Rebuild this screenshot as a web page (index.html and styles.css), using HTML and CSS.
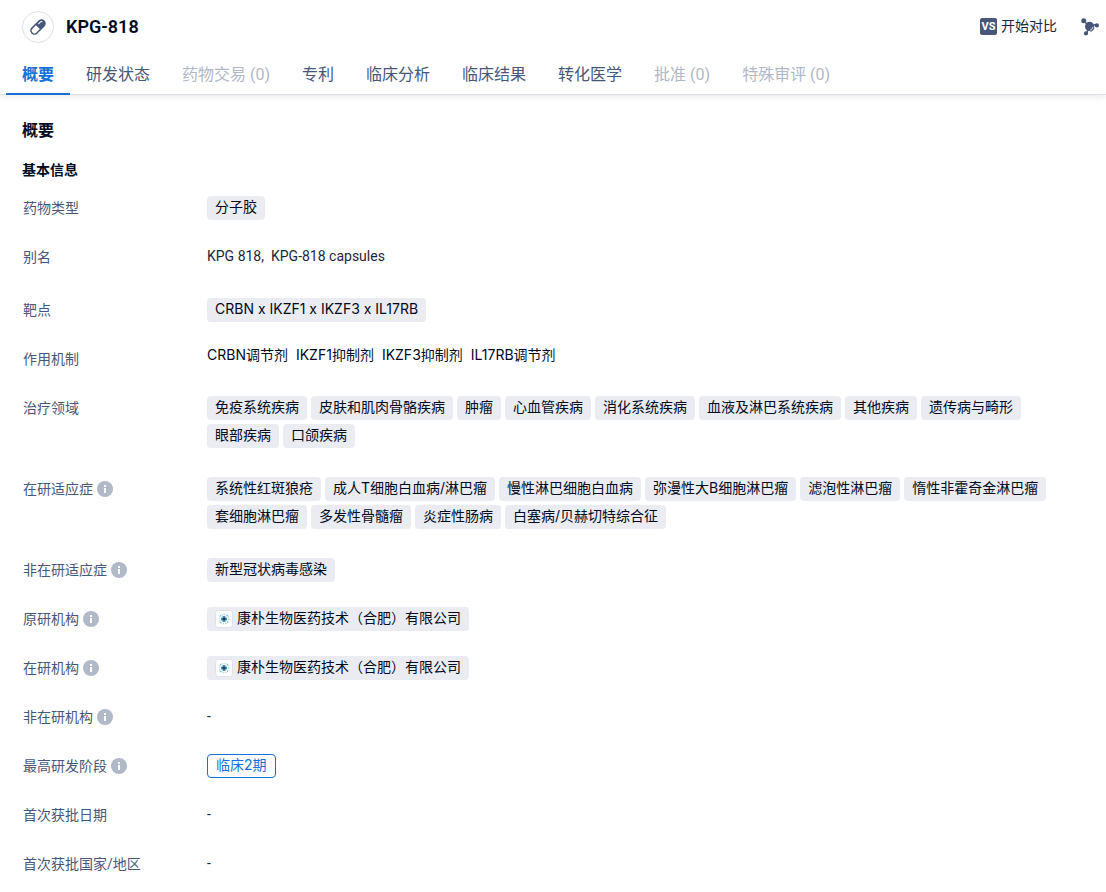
FILE: index.html
```html
<!DOCTYPE html>
<html lang="zh-CN">
<head>
    <meta charset="UTF-8">
    <title>KPG-818</title>
    <meta name="viewport" content="width=device-width, initial-scale=1.0">
    <link rel="stylesheet" href="styles.css">
</head>
<body>
    <!-- Shared icons -->
    <svg class="sprite" aria-hidden="true">
        <symbol id="icon-info" viewBox="0 0 16 16">
            <circle cx="8" cy="8" r="8" fill="#b1b8c7"/>
            <rect x="7" y="4" width="2" height="2" fill="#fff"/>
            <rect x="7" y="7" width="2" height="5" fill="#fff"/>
        </symbol>
        <symbol id="icon-org" viewBox="0 0 18 18">
            <rect x=".5" y=".5" width="17" height="17" rx="3" fill="#fff" stroke="#dfe2e9"/>
            <circle cx="9" cy="9" r="4.6" fill="none" stroke="#a9dbe6" stroke-width="1.6" stroke-dasharray="1.2 1.1"/>
            <circle cx="9" cy="9" r="3" fill="#7fbfd0"/>
            <path d="M9 6v6M6 9h6" stroke="#2b5878" stroke-width="1"/>
            <circle cx="9" cy="9" r="1.6" fill="#153f63"/>
            <path d="M5 5h1v1H5zM12 5h1v1h-1zM5 12h1v1H5zM12 12h1v1h-1z" fill="#7fc3d4"/>
        </symbol>
    </svg>

    <header class="header">
        <div class="title-bar">
            <span class="drug-icon">
                <svg width="20" height="20" viewBox="0 0 20 20" aria-hidden="true">
                    <g transform="rotate(45 10 10)">
                        <rect x="5.8" y="0.8" width="8.4" height="18.4" rx="4.2" fill="#485778"/>
                        <path d="M7.3 10.2h5.4v4.8a2.7 2.7 0 0 1-5.4 0z" fill="#fff"/>
                        <path d="M8.1 7.4V5a1.9 1.9 0 0 1 1-1.7" fill="none" stroke="#fff" stroke-width="1" stroke-linecap="round"/>
                    </g>
                </svg>
            </span>
            <h1>KPG-818</h1>
            <div class="actions">
                <button type="button" class="compare"><span class="vs">VS</span>开始对比</button>
                <button type="button" class="graph" aria-label="关系图谱">
                    <svg width="18" height="18" viewBox="0 0 18 18" aria-hidden="true">
                        <path d="M2.5 3l6 5 7-1.5M8.5 8l-3 7.5" fill="none" stroke="#485778" stroke-width="1.6"/>
                        <circle cx="2.7" cy="2.8" r="2.5" fill="#485778"/>
                        <circle cx="15.9" cy="7.4" r="2.1" fill="#485778"/>
                        <circle cx="5" cy="15.4" r="2.1" fill="#485778"/>
                        <circle cx="8.6" cy="8.4" r="4.6" fill="#485778"/>
                        <path d="M13.2 9.8a4.8 4.8 0 0 1-3.9 3.9" fill="none" stroke="#485778" stroke-width=".8"/>
                        <path d="M12 8.8a3.6 3.6 0 0 1-2.8 3.2" fill="none" stroke="#fff" stroke-width=".8"/>
                    </svg>
                </button>
            </div>
        </div>
        <nav class="tabs">
            <a href="#overview" class="active">概要</a>
            <a href="#status">研发状态</a>
            <a href="#deals" class="disabled">药物交易 (0)</a>
            <a href="#patents">专利</a>
            <a href="#trials">临床分析</a>
            <a href="#results">临床结果</a>
            <a href="#translational">转化医学</a>
            <a href="#approvals" class="disabled">批准 (0)</a>
            <a href="#reviews" class="disabled">特殊审评 (0)</a>
        </nav>
    </header>

    <main class="content" id="overview">
        <h2>概要</h2>
        <h3>基本信息</h3>
        <dl class="info">
            <div class="row">
                <dt>药物类型</dt>
                <dd><span class="tag">分子胶</span></dd>
            </div>
            <div class="row tall">
                <dt>别名</dt>
                <dd class="plain"><span>KPG 818,</span><span>KPG-818 capsules</span></dd>
            </div>
            <div class="row">
                <dt>靶点</dt>
                <dd><a href="#" class="tag">CRBN x IKZF1 x IKZF3 x IL17RB</a></dd>
            </div>
            <div class="row">
                <dt>作用机制</dt>
                <dd class="mechanism"><span>CRBN调节剂</span><span>IKZF1抑制剂</span><span>IKZF3抑制剂</span><span>IL17RB调节剂</span></dd>
            </div>
            <div class="row tall">
                <dt>治疗领域</dt>
                <dd>
                    <span class="tag">免疫系统疾病</span>
                    <span class="tag">皮肤和肌肉骨骼疾病</span>
                    <span class="tag">肿瘤</span>
                    <span class="tag">心血管疾病</span>
                    <span class="tag">消化系统疾病</span>
                    <span class="tag">血液及淋巴系统疾病</span>
                    <span class="tag">其他疾病</span>
                    <span class="tag">遗传病与畸形</span>
                    <span class="tag">眼部疾病</span>
                    <span class="tag">口颌疾病</span>
                </dd>
            </div>
            <div class="row tall">
                <dt>在研适应症<svg class="info-icon"><use href="#icon-info"/></svg></dt>
                <dd>
                    <a href="#" class="tag">系统性红斑狼疮</a>
                    <a href="#" class="tag">成人T细胞白血病/淋巴瘤</a>
                    <a href="#" class="tag">慢性淋巴细胞白血病</a>
                    <a href="#" class="tag">弥漫性大B细胞淋巴瘤</a>
                    <a href="#" class="tag">滤泡性淋巴瘤</a>
                    <a href="#" class="tag">惰性非霍奇金淋巴瘤</a>
                    <a href="#" class="tag">套细胞淋巴瘤</a>
                    <a href="#" class="tag">多发性骨髓瘤</a>
                    <a href="#" class="tag">炎症性肠病</a>
                    <a href="#" class="tag">白塞病/贝赫切特综合征</a>
                </dd>
            </div>
            <div class="row">
                <dt>非在研适应症<svg class="info-icon"><use href="#icon-info"/></svg></dt>
                <dd><a href="#" class="tag">新型冠状病毒感染</a></dd>
            </div>
            <div class="row">
                <dt>原研机构<svg class="info-icon"><use href="#icon-info"/></svg></dt>
                <dd><a href="#" class="tag"><svg class="org-icon"><use href="#icon-org"/></svg>康朴生物医药技术（合肥）有限公司</a></dd>
            </div>
            <div class="row">
                <dt>在研机构<svg class="info-icon"><use href="#icon-info"/></svg></dt>
                <dd><a href="#" class="tag"><svg class="org-icon"><use href="#icon-org"/></svg>康朴生物医药技术（合肥）有限公司</a></dd>
            </div>
            <div class="row">
                <dt>非在研机构<svg class="info-icon"><use href="#icon-info"/></svg></dt>
                <dd class="plain">-</dd>
            </div>
            <div class="row">
                <dt>最高研发阶段<svg class="info-icon"><use href="#icon-info"/></svg></dt>
                <dd><span class="tag phase">临床2期</span></dd>
            </div>
            <div class="row">
                <dt>首次获批日期</dt>
                <dd class="plain">-</dd>
            </div>
            <div class="row">
                <dt>首次获批国家/地区</dt>
                <dd class="plain">-</dd>
            </div>
        </dl>
    </main>
</body>
</html>
```

FILE: styles.css
```css
* { box-sizing: border-box; }
body {
    margin: 0;
    font-family: Roboto, "Noto Sans CJK SC", sans-serif;
    font-size: 14px;
    color: #1d2638;
    background: #fff;
}
a { color: inherit; text-decoration: none; }
h1, h2, h3, dl, dd { margin: 0; }
h2, h3 { color: #000a1f; font-weight: bold; }
.sprite { position: absolute; width: 0; height: 0; }

.header {
    border-bottom: 1px solid #dde0e8;
    box-shadow: 0 2px 6px rgba(30,40,70,0.1);
}
.title-bar {
    display: flex;
    align-items: center;
    height: 54px;
    padding: 0 7px 0 22px;
}
.drug-icon {
    display: flex;
    align-items: center;
    justify-content: center;
    width: 32px;
    height: 32px;
    margin-right: 12px;
    border: 1px solid #dde0e8;
    border-radius: 50%;
}
h1 {
    padding-bottom: 2px;
    font-size: 18px;
    font-weight: 600;
    color: #000a1f;
}
.actions {
    display: flex;
    align-items: center;
    gap: 24px;
    margin-left: auto;
}
.actions button {
    display: flex;
    align-items: center;
    gap: 4px;
    padding: 0;
    border: none;
    background: none;
    font: inherit;
    line-height: 20px;
    color: #1d2638;
    cursor: pointer;
}
.actions .compare { padding-bottom: 2px; }
.vs {
    width: 17px;
    height: 17px;
    border-radius: 2px;
    background: #485778;
    color: #fff;
    font-size: 11px;
    font-weight: bold;
    line-height: 17px;
    text-align: center;
}

.tabs {
    display: flex;
    height: 40px;
    padding: 0 6px;
}
.tabs a {
    height: 41px;
    padding: 0 16px;
    font-size: 16px;
    line-height: 42px;
    color: #485778;
    white-space: nowrap;
}
.tabs .active {
    color: #1472d6;
    font-weight: bold;
    border-bottom: 2px solid #1472d6;
}
.tabs .disabled { color: #b1b8c7; }

.content { padding: 24px 22px; }
h2 {
    font-size: 16px;
    line-height: 24px;
}
h3 {
    margin: 15px 0 14px;
    font-size: 14px;
    line-height: 24px;
}

.row {
    display: flex;
    padding-bottom: 25px;
}
.row.tall { padding-bottom: 29px; }
dt {
    display: flex;
    flex: 0 0 185px;
    align-items: center;
    gap: 4px;
    height: 24px;
    padding-left: 1px;
    line-height: 24px;
    color: #485778;
}
.info-icon { width: 16px; height: 16px; }
dd {
    display: flex;
    flex: 1;
    flex-wrap: wrap;
    gap: 4px;
    font-family: Inter, "Noto Sans CJK SC", sans-serif;
}
.plain {
    gap: 7px;
    font-family: Roboto, "Noto Sans CJK SC", sans-serif;
    line-height: 22px;
}
.mechanism {
    gap: 8px;
    line-height: 16px;
    color: #000a1f;
}
.tag {
    display: flex;
    height: 24px;
    padding: 0 8px;
    border-radius: 4px;
    background: #ebecf1;
    color: #000a1f;
    line-height: 22px;
}
.org-icon {
    width: 18px;
    height: 18px;
    margin: 3px 4px 3px 0;
}
.tag.phase {
    border: 1px solid #1472d6;
    background: #fff;
    color: #1472d6;
    line-height: 20px;
}
```
